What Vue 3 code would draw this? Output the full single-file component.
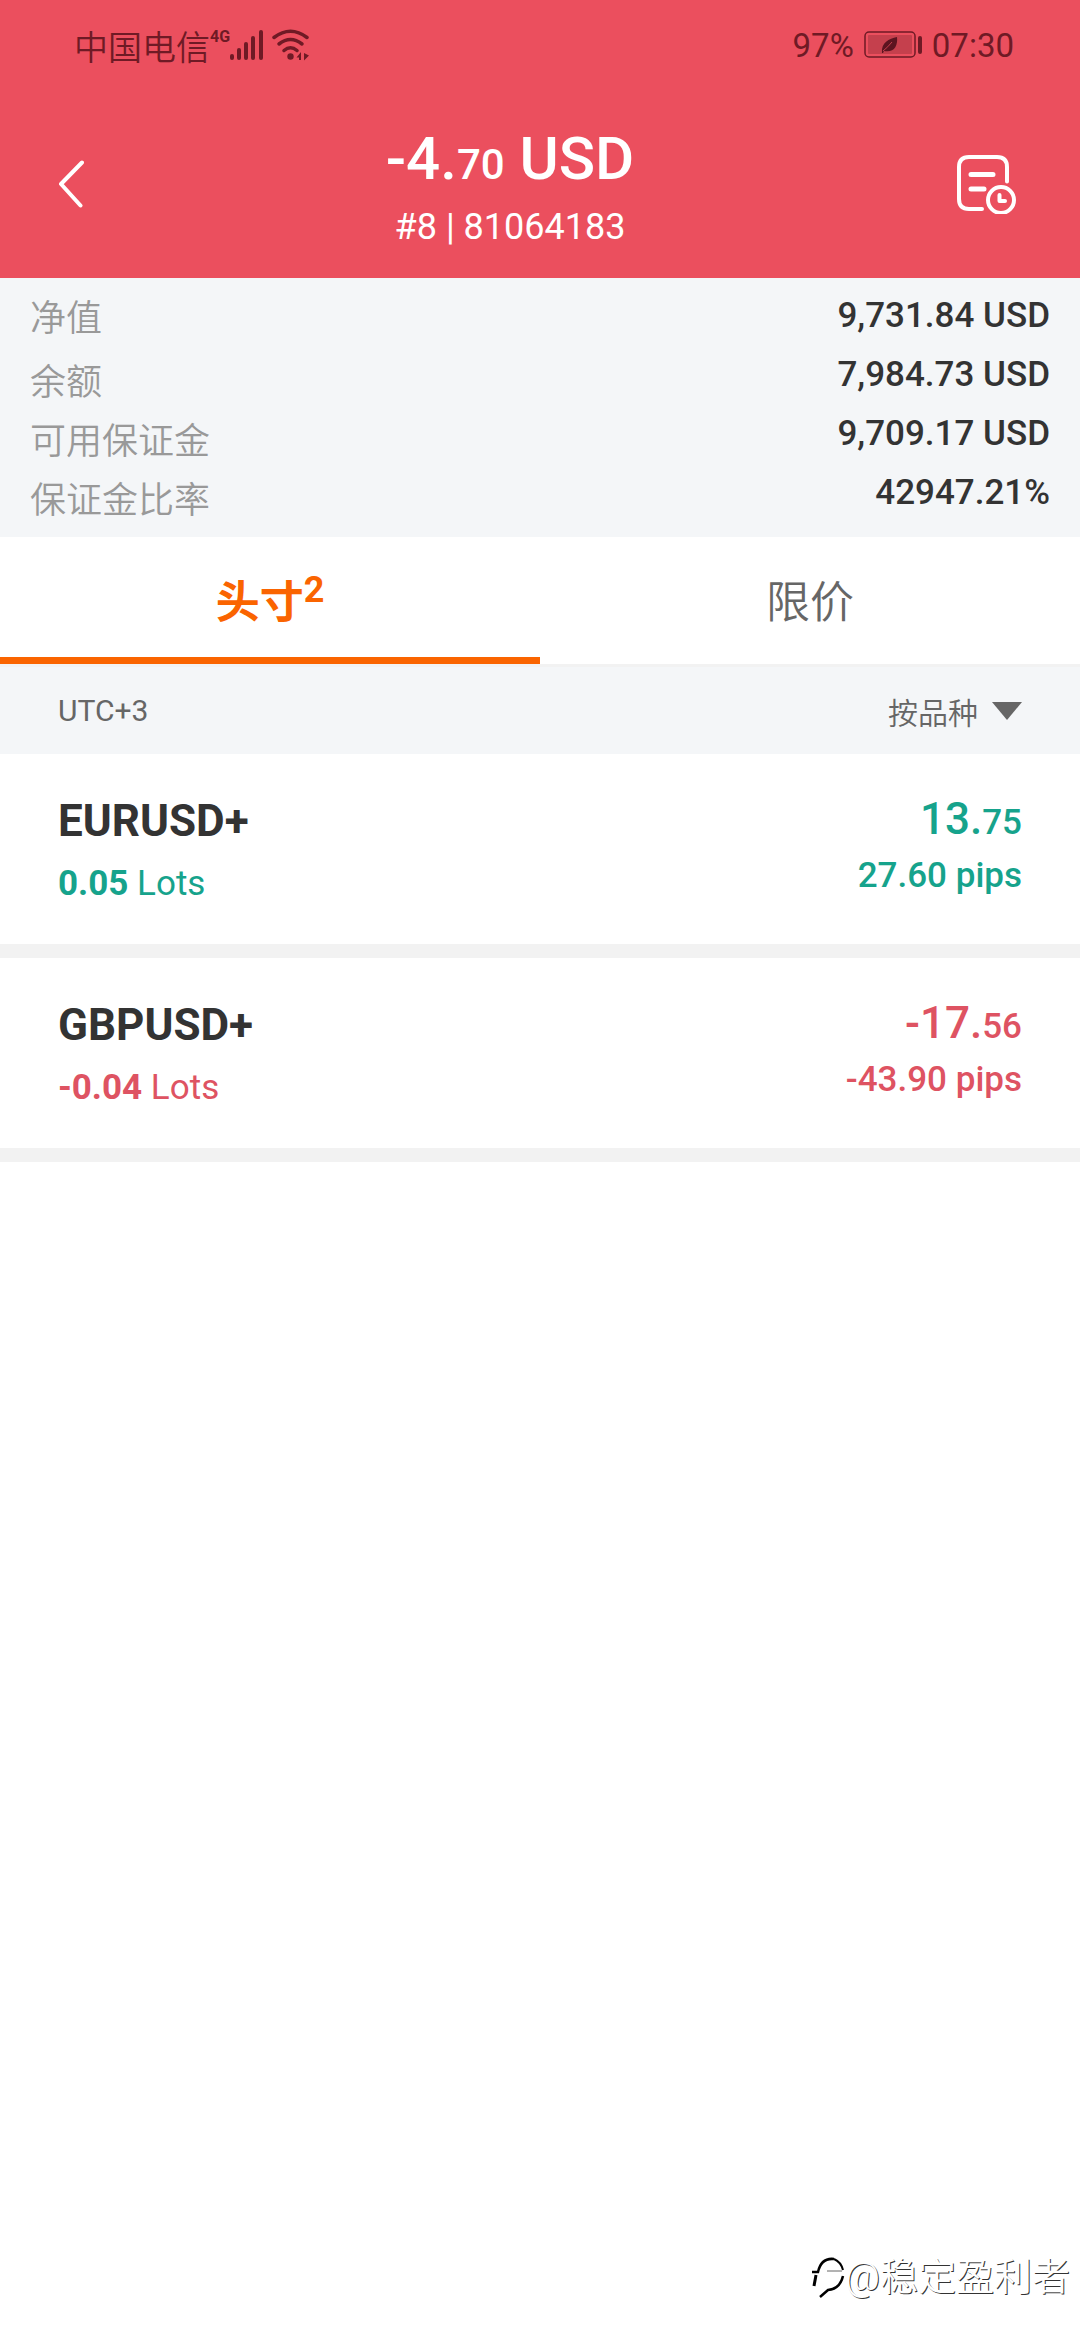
<script setup>
import { ref } from 'vue'

const summary = [
  { label: '净值', value: '9,731.84 USD' },
  { label: '余额', value: '7,984.73 USD' },
  { label: '可用保证金', value: '9,709.17 USD' },
  { label: '保证金比率', value: '42947.21%' },
]

const tabs = [
  { id: 'positions', label: '头寸', count: 2 },
  { id: 'limits', label: '限价', count: 0 },
]
const active = ref('positions')

const positions = [
  { symbol: 'EURUSD+', lots: '0.05', whole: '13.', cents: '75', pips: '27.60', tone: 'gain' },
  { symbol: 'GBPUSD+', lots: '-0.04', whole: '-17.', cents: '56', pips: '-43.90', tone: 'loss' },
]
</script>

<template>
  <div class="screen">
    <header class="top">
      <div class="status">
        <div class="status-side">
          <span class="carrier">中国电信</span>
          <span class="network">4G</span>
          <svg width="34" height="32" viewBox="0 0 34 32" fill="currentColor" aria-hidden="true">
            <rect x="0" y="25" width="4" height="6" rx="2" />
            <rect x="7" y="19" width="4" height="12" rx="2" />
            <rect x="14" y="13" width="4" height="18" rx="2" />
            <rect x="21" y="7" width="4" height="24" rx="2" />
            <rect x="29" y="1" width="4" height="30" rx="2" />
          </svg>
          <svg class="wifi" width="38" height="32" viewBox="0 0 38 32" aria-hidden="true">
            <g fill="none" stroke="currentColor" stroke-width="3.500" stroke-linecap="round">
              <path d="M2 8.500Q18.500-4 35 8.500" />
              <path d="M7 15Q18.500 6 30 15" />
              <path d="M12 21.500Q18.500 16 25 21.500" />
            </g>
            <circle cx="18.500" cy="27.500" r="3.200" fill="currentColor" />
            <path d="M29 23v8h-2v-2.500h-2.500zM32 24l5 2.500-5 5z" fill="currentColor" />
          </svg>
        </div>
        <div class="status-side">
          <span class="clock">97%</span>
          <svg class="battery" width="58" height="28" viewBox="0 0 58 28" aria-hidden="true">
            <rect x="1" y="1" width="50" height="25" rx="4" fill="none" stroke="currentColor" stroke-width="1.500" />
            <rect x="4" y="4" width="44" height="19" rx="1" fill="#c5404d" />
            <rect x="54" y="5" width="4" height="18" rx="2" fill="currentColor" />
            <path d="M18 22C17 11 25 8 33 6C34 15 30 22 20 20L19 22Z" fill="#5c1420" />
            <path d="M19 20Q24 16 28 11" fill="none" stroke="#c5404d" stroke-width="1" />
          </svg>
          <span class="clock">07:30</span>
        </div>
      </div>
      <div class="bar">
        <button class="icon-button" type="button" aria-label="返回">
          <svg width="26" height="48" viewBox="0 0 26 48" fill="none" stroke="#fff" stroke-width="4" stroke-linecap="round" stroke-linejoin="round">
            <path d="M24 2.500L3 24L22.500 45.500" />
          </svg>
        </button>
        <div class="heading">
          <h1 class="total">-4.<span class="total-cents">70</span> USD</h1>
          <p class="account">#8 | 81064183</p>
        </div>
        <button class="icon-button history" type="button" aria-label="历史">
          <svg width="60" height="60" viewBox="0 0 60 60" fill="none" stroke="#fff" stroke-width="4" stroke-linecap="round" stroke-linejoin="round">
            <path d="M51 27.500V13Q51 3 41 3H13Q3 3 3 13V45Q3 55 13 55H26" />
            <path d="M15 20.500H37M15 35H28" stroke-width="5" />
            <circle cx="45" cy="46" r="13" />
            <path d="M43.500 41V47H49" />
          </svg>
        </button>
      </div>
    </header>

    <dl class="summary">
      <div v-for="row in summary" :key="row.label" class="summary-row">
        <dt>{{ row.label }}</dt>
        <dd>{{ row.value }}</dd>
      </div>
    </dl>

    <nav class="tabs">
      <button
        v-for="tab in tabs"
        :key="tab.id"
        type="button"
        class="tab"
        :class="{ active: active === tab.id }"
        @click="active = tab.id"
      >
        {{ tab.label }}<span v-if="tab.count" class="count">{{ tab.count }}</span>
      </button>
    </nav>

    <div class="filter">
      <span>UTC+3</span>
      <button type="button" class="sort">
        按品种
        <svg width="30" height="18" viewBox="0 0 30 18" aria-hidden="true"><path d="M0 0H30L15 18Z" fill="#666" /></svg>
      </button>
    </div>

    <main>
      <article v-for="p in positions" :key="p.symbol" class="position">
        <div>
          <h2 class="symbol">{{ p.symbol }}</h2>
          <p class="lots" :class="p.tone"><b>{{ p.lots }}</b> Lots</p>
        </div>
        <div class="result" :class="p.tone">
          <p class="profit">{{ p.whole }}<span class="cents">{{ p.cents }}</span></p>
          <p class="pips">{{ p.pips }} pips</p>
        </div>
      </article>
    </main>

    <div class="watermark">
      <svg width="34" height="42" viewBox="0 0 34 42" fill="none" stroke="#000" aria-hidden="true">
        <path d="M1 16H7C9 7 14 2 23 3" stroke-width="2.500" />
        <path d="M5 19L3 30" stroke-width="3" />
        <path d="M23 3Q30 6 32 14" stroke-width="2" />
        <path d="M16 15H31" stroke-width="1" stroke="#666" />
        <path d="M32 20Q29 33 17 34L9 41" stroke-width="2.500" />
      </svg>
      <span>@稳定盈利者</span>
    </div>
  </div>
</template>

<style>
body {
  background: #fff;
}
</style>

<style scoped>
.screen {
  position: relative;
  min-height: 100vh;
  color: #333;
  font-family: Roboto, "Noto Sans CJK SC", sans-serif;
}
h1,
h2,
p,
dl,
dd {
  margin: 0;
}
button {
  padding: 0;
  border: 0;
  background: none;
  color: inherit;
  font: inherit;
}
svg {
  display: block;
}

.top {
  background: #eb4f5e;
  color: #fff;
}
.status {
  display: flex;
  justify-content: space-between;
  height: 90px;
  padding: 0 66px 0 74px;
  color: #6f1a25;
}
.status-side {
  display: flex;
  align-items: center;
}
.carrier {
  font-size: 34px;
  font-weight: 350;
}
.network {
  align-self: flex-start;
  margin-top: 27px;
  font-size: 16px;
  line-height: 20px;
  font-weight: 700;
}
.wifi {
  margin-left: 8px;
}
.clock {
  font-size: 33px;
}
.battery {
  margin: 0 10px;
}
.bar {
  display: flex;
  align-items: center;
  height: 188px;
  padding: 0 64px 0 58px;
}
.icon-button {
  flex: none;
}
.history {
  margin-left: 20px;
}
.heading {
  flex: 1;
  padding-top: 18px;
  text-align: center;
}
.total {
  font-size: 60px;
  font-weight: 500;
  line-height: 68px;
}
.total-cents {
  font-size: 42px;
  line-height: 1;
}
.account {
  font-size: 36px;
  line-height: 68px;
}

.summary {
  padding: 8px 30px 15px;
  background: #f4f6f8;
}
.summary-row {
  display: flex;
  justify-content: space-between;
  align-items: flex-start;
  height: 59px;
}
dt {
  color: #999;
  font-size: 36px;
  font-weight: 350;
  line-height: 77px;
}
.summary-row:first-child dt {
  line-height: 67px;
}
dd {
  font-size: 35px;
  font-weight: 500;
  line-height: 60px;
}

.tabs {
  display: flex;
  border-bottom: 3px solid #f2f2f2;
}
.tab {
  flex: 1;
  display: flex;
  justify-content: center;
  align-items: center;
  height: 127px;
  padding-top: 4px;
  border-bottom: 7px solid transparent;
  color: #666;
  font-size: 44px;
  font-weight: 350;
}
.tab.active {
  border-color: #fa6400;
  color: #fa6400;
  font-weight: 700;
}
.count {
  align-self: flex-start;
  margin-top: 29px;
  font-size: 36px;
  line-height: 40px;
}

.filter {
  display: flex;
  justify-content: space-between;
  align-items: center;
  height: 87px;
  padding: 0 58px;
  background: #f4f6f8;
  color: #666;
  font-size: 30px;
}
.sort {
  display: flex;
  align-items: center;
  gap: 14px;
  font-weight: 350;
}

.position {
  display: flex;
  justify-content: space-between;
  padding: 36px 58px 28px;
  border-bottom: 14px solid #f2f2f2;
}
.symbol {
  font-size: 44px;
  font-weight: 700;
  line-height: 62px;
}
.lots {
  font-size: 35px;
  line-height: 64px;
}
.result {
  text-align: right;
  font-weight: 500;
}
.profit {
  font-size: 44px;
  line-height: 58px;
}
.cents {
  font-size: 35px;
  line-height: 1;
}
.pips {
  font-size: 35px;
  line-height: 56px;
}
.gain {
  color: #16a38c;
}
.loss {
  color: #de5362;
}

.watermark {
  position: absolute;
  right: 10px;
  bottom: 33px;
  display: flex;
  align-items: center;
  color: #fff;
  font-size: 38px;
  font-weight: 350;
  line-height: 60px;
  text-shadow: 1px 1px 0 #333;
}
</style>
